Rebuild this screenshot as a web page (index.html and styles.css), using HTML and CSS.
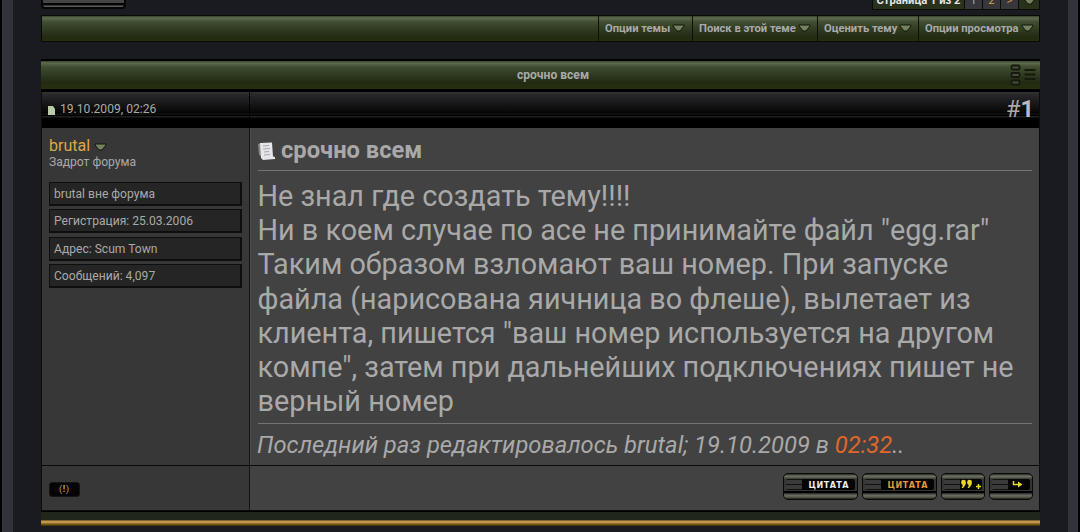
FILE: index.html
```html
<!DOCTYPE html>
<html lang="ru">
<head>
  <meta charset="UTF-8">
  <meta name="viewport" content="width=device-width, initial-scale=1.0">
  <title>срочно всем</title>
  <link rel="stylesheet" href="styles.css">
</head>
<body>
  <div class="page">
    <div class="top">
      <div class="reply-btn"></div>
      <div class="pager">
        <span class="pages">Страница 1 из 2</span>
        <span class="num">1</span>
        <a class="num link">2</a>
        <a class="num link">&gt;</a>
        <span class="drop"><svg class="arrow" viewBox="0 0 13 8"><path d="M1 1h11v1L8 7H5L1 2z"/></svg></span>
      </div>
    </div>

    <nav class="toolbar">
      <a class="tool tool-theme">Опции темы <svg class="arrow" viewBox="0 0 13 8"><path d="M1 1h11v1L8 7H5L1 2z"/></svg></a>
      <a class="tool tool-search">Поиск в этой теме <svg class="arrow" viewBox="0 0 13 8"><path d="M1 1h11v1L8 7H5L1 2z"/></svg></a>
      <a class="tool tool-rate">Оценить тему <svg class="arrow" viewBox="0 0 13 8"><path d="M1 1h11v1L8 7H5L1 2z"/></svg></a>
      <a class="tool tool-view">Опции просмотра <svg class="arrow" viewBox="0 0 13 8"><path d="M1 1h11v1L8 7H5L1 2z"/></svg></a>
    </nav>

    <div class="title-bar">
      <span>срочно всем</span>
      <svg class="grip" viewBox="0 0 26 22">
        <g class="grip-box">
          <rect x="1.500" y="1.500" width="8" height="4" rx="1"/>
          <rect x="1.500" y="9" width="8" height="4" rx="1"/>
          <rect x="1.500" y="16.500" width="8" height="4" rx="1"/>
        </g>
        <path class="grip-lines" d="M14.500 6h11M14.500 10.500h11M14.500 15h11"/>
      </svg>
    </div>

    <div class="post">
      <div class="post-head">
        <div class="date">
          <svg class="doc" viewBox="0 0 8 10"><path d="M0 1h5l2 3v6H0z"/></svg>
          19.10.2009, 02:26
        </div>
        <div class="post-num">#<b>1</b></div>
      </div>

      <div class="post-body">
        <aside class="user">
          <div class="name">brutal <svg class="arrow" viewBox="0 0 13 8"><path d="M1 1h11v1L8 7H5L1 2z"/></svg></div>
          <div class="rank">Задрот форума</div>
          <ul class="info">
            <li>brutal вне форума</li>
            <li>Регистрация: 25.03.2006</li>
            <li>Адрес: Scum Town</li>
            <li>Сообщений: 4,097</li>
          </ul>
        </aside>
        <article class="message">
          <h2>
            <svg class="paper" viewBox="0 0 17 19">
              <path class="back" d="M0 2l3-1v13l-2-1z"/>
              <path class="sheet" d="M2 1l12-.500 1 14 2 .500v2l-12 1-2-2z"/>
              <path class="script" d="M5 4l6-.500M5 7l7-.500M6 10l5-.500M6 13l6-.500"/>
            </svg>
            срочно всем
          </h2>
          <p class="text">Не знал где создать тему!!!!<br>
            Ни в коем случае по асе не принимайте файл "egg.rar"<br>
            Таким образом взломают ваш номер. При запуске<br>
            файла (нарисована яичница во флеше), вылетает из<br>
            клиента, пишется "ваш номер используется на другом<br>
            компе", затем при дальнейших подключениях пишет не<br>
            верный номер</p>
          <p class="edited">Последний раз редактировалось brutal; 19.10.2009 в <span class="time">02:32</span>..</p>
        </article>
      </div>

      <div class="post-foot">
        <div class="foot-left"><span class="report">(<b>!</b>)</span></div>
        <div class="foot-right">
          <a class="btn btn-wide"><span class="slot">ЦИТАТА</span></a>
          <a class="btn btn-wide"><span class="slot orange">ЦИТАТА</span></a>
          <a class="btn">
            <span class="slot"><svg class="glyph" viewBox="0 0 22 11">
              <path class="fill" d="M1.500 1.500q2-1.500 4 0Q7 5 3 9H1.500Q3.500 6.500 2 5.500 .500 4 1.500 1.500zM7.500 1.500q2-1.500 4 0Q13 5 9 9H7.500Q9.500 6.500 8 5.500 6.500 4 7.500 1.500z"/>
              <path class="stroke" d="M16 7.500h5M18.500 5v5"/>
            </svg></span>
          </a>
          <a class="btn">
            <span class="slot"><svg class="glyph" viewBox="0 0 22 11">
              <path class="stroke" d="M5.500 2v3.500h6"/>
              <path class="fill" d="M10 2.500l4.500 3L10 8.500z"/>
            </svg></span>
          </a>
        </div>
      </div>
    </div>
    <div class="gold"></div>
  </div>
</body>
</html>
```
FILE: styles.css
```css
:root {
  --green: linear-gradient(#34402a 0, #606c4e 2px, #566245 3px, #414d31 6px, #333f24 12px, #29331b 17px, #222b10 22px, #26300f 100%);
}

* {
  box-sizing: border-box;
}

body {
  margin: 0;
  height: 532px;
  overflow: hidden;
  background: #1a1b20;
  color: #a9a9a9;
  font-family: Roboto, "Noto Sans", sans-serif;
  font-size: 12.100px;
}

.page {
  height: 532px;
  padding: 0 28px;
  border-left: 13px solid #32323b;
  border-right: 12px solid #32323b;
  border-image: linear-gradient(to right, #000 2px, #32323b 2px, #32323b 1078px, #000 1078px) 0 12 0 13;
}

.arrow {
  width: 13px;
  height: 8px;
  flex: none;
  fill: #74825f;
  stroke: #10160b;
  stroke-width: 1;
}

/* top strip */
.top {
  height: 15px;
  display: flex;
  justify-content: space-between;
  align-items: flex-start;
}

.reply-btn {
  width: 85px;
  height: 9px;
  border: 2px solid #050505;
  border-top: 0;
  border-radius: 0 0 4px 4px;
  background: linear-gradient(#444 0, #444 3px, #000 3px, #000 5px, #6b6b6b 6px, #33342c 8px);
}

.pager {
  height: 10px;
  width: 168px;
  display: flex;
  gap: 1px;
  padding: 0 1px 1px;
  background: #0a0c08;
  font-size: 11.200px;
  font-weight: bold;
}

.pager > * {
  height: 9px;
  background: #36363b;
}

.pager .pages {
  width: 91px;
  background: #28321b;
  color: #e4e4e4;
  text-align: center;
  white-space: nowrap;
}

.pages, .num {
  line-height: 2px;
}

.num {
  width: 17px;
  text-align: center;
  font-weight: normal;
}

.link {
  color: #d9a23c;
}

.pager .drop {
  flex: 1;
  display: flex;
  justify-content: center;
  align-items: flex-start;
  background: #28321b;
}

.drop .arrow {
  margin-top: -3px;
}

/* toolbar */
.toolbar {
  height: 27px;
  display: flex;
  justify-content: flex-end;
  border: 1px solid #080a06;
  background: var(--green);
  font-size: 11.180px;
  font-weight: bold;
}

.tool {
  display: flex;
  align-items: center;
  gap: 2px;
  padding-left: 6px;
  border-left: 1px solid #0c1208;
  white-space: nowrap;
}

.tool .arrow {
  margin-top: -2px;
}

.tool-theme { width: 94px; }
.tool-search { width: 125px; }
.tool-rate { width: 101px; }
.tool-view { width: 121px; }

.title-bar {
  height: 33px;
  margin-top: 17px;
  display: grid;
  grid-template-columns: 1fr auto 1fr;
  align-items: center;
  padding-left: 25px;
  border: solid #000;
  border-width: 2px 0 3px;
  background: var(--green);
  font-weight: bold;
}

.title-bar span {
  grid-column: 2;
}

.grip {
  width: 26px;
  height: 22px;
  justify-self: end;
  margin-right: 4px;
  fill: none;
  stroke: #151b0c;
  stroke-width: 1.8;
}

.grip-box {
  fill: #4a4d40;
}

/* post */
.post {
  border: 1px solid #0c0c0c;
  border-top: 0;
}

.post-head,
.post-body,
.post-foot {
  display: grid;
  grid-template-columns: 208px 1fr;
}

.post-head {
  height: 36px;
  background: linear-gradient(#343436 0, #28282a 3px, #1a1a1c 10px, #080808 20px, #000 21px, #1a1a1a 22px, #000 23px, #000 24px, #202020 24px, #202020 25px, #000 26px);
}

.date {
  display: flex;
  align-items: center;
  padding: 0 0 2px 6px;
  border-right: 1px solid #000;
}

.doc {
  width: 8px;
  height: 10px;
  margin: 2px 4px 0 0;
  fill: #b9cba9;
}

.post-num {
  padding-right: 5px;
  text-align: right;
  font-size: 23.500px;
  line-height: 34px;
}

.post-num b {
  color: #b9b9c8;
}

.post-body {
  height: 338px;
  border-bottom: 1px solid #0b0b0b;
}

.user {
  padding: 8px 7px 0;
  border-right: 1px solid #141414;
  background: #373737;
}

.name {
  display: flex;
  align-items: center;
  gap: 4px;
  color: #dfa743;
  font-size: 16px;
  line-height: 19px;
}

.name .arrow {
  margin-top: 2px;
}

.rank {
  line-height: 14px;
}

.info {
  display: flex;
  flex-direction: column;
  gap: 3.300px;
  margin: 13px 0 0;
  padding: 0;
  list-style: none;
}

.info li {
  height: 24px;
  padding-left: 4px;
  border: solid #0e0e0e;
  border-width: 1px 2px 2px 1px;
  background: #252525;
  line-height: 22px;
}

.message {
  padding: 8px 7px 0;
  border-left: 1px solid #4c4c4c;
  background: #424242;
  white-space: nowrap;
}

h2 {
  height: 35px;
  display: flex;
  align-items: center;
  gap: 6px;
  margin: 0;
  padding-bottom: 6px;
  border-bottom: 1px solid #747474;
  font-size: 23.700px;
}

.paper {
  width: 17px;
  height: 19px;
  margin: 2px 0 0;
}

.back { fill: #85858c; }
.sheet { fill: #e6e6ea; }
.script { fill: none; stroke: #8a8a90; stroke-width: .7; }

.text {
  height: 253px;
  margin: 0 0 0 -0.500px;
  padding-top: 8px;
  border-bottom: 1px solid #747474;
  font-size: 28.800px;
  line-height: 34.200px;
}

.edited {
  margin: 7px 0 0 -1px;
  font-size: 23.770px;
  font-style: italic;
  line-height: 28px;
}

.time {
  color: #e0682a;
}

/* footer with buttons */
.post-foot {
  height: 44px;
}

.foot-left {
  display: flex;
  align-items: center;
  padding: 3px 0 0 7px;
  border-right: 1px solid #141414;
  background: #373737;
}

.report {
  width: 31px;
  height: 15px;
  border: 1px solid #151515;
  border-radius: 3px;
  background: #060404;
  color: #b0a89c;
  font-size: 9px;
  letter-spacing: .8px;
  line-height: 13px;
  text-align: center;
}

.foot-right {
  display: flex;
  justify-content: flex-end;
  align-items: flex-start;
  gap: 4px;
  padding: 7px 6px 0 0;
  background: #424242;
}

.btn {
  width: 44px;
  height: 27px;
  padding: 5px 2px 0;
  border: 1px solid #080a06;
  border-radius: 5px;
  background: linear-gradient(#222 0, #6b7262 2px, #646a5c 3px, #343630 5px, #353535 17px, #000 17px, #000 19px, #333 19px, #333 20px, #6a6f62 21px, #5a5f52 23px, #1b1c18 25px);
}

.btn-wide {
  width: 75px;
}

.slot {
  height: 11px;
  display: flex;
  justify-content: flex-end;
  align-items: center;
  padding: 1px 6px 0 0;
  border-radius: 2px;
  background: linear-gradient(#111 0, #111 1px, #3a3a3a 1px, #3a3a3a 5px, #111 5px, #111 6px, #3a3a3a 6px, #3a3a3a 10px, #111 10px) 0 0 / 16px 11px no-repeat #050505;
  color: #eee;
  font-family: "DejaVu Sans", sans-serif;
  font-size: 8px;
  font-weight: bold;
  letter-spacing: .5px;
}

.slot.orange {
  color: #e39a3c;
}

.btn:not(.btn-wide) .slot {
  padding: 0;
}

.glyph {
  width: 22px;
  height: 11px;
}

.fill { fill: #e8d631; }
.stroke { fill: none; stroke: #e8d631; stroke-width: 1.5; }

.gold {
  height: 15px;
  background: linear-gradient(#000 0, #000 1px, #20261a 1px, #20261a 9px, #3a2c18 9px, #c89c50 10px, #bd9146 12px, #6b5110 13px, #755a12 14px, #15120a 15px);
}
```
